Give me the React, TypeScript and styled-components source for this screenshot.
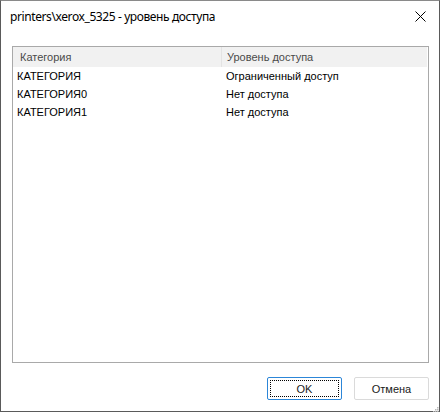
import React from 'react';
import styled, { createGlobalStyle } from 'styled-components';

const GlobalStyle = createGlobalStyle`
  html, body {
    margin: 0;
    padding: 0;
    background: #ffffff;
  }
  #root {
    width: 440px;
    height: 412px;
  }
`;

type Row = { category: string; level: string };

const rows: Row[] = [
    { category: 'КАТЕГОРИЯ', level: 'Ограниченный доступ' },
    { category: 'КАТЕГОРИЯ0', level: 'Нет доступа' },
    { category: 'КАТЕГОРИЯ1', level: 'Нет доступа' },
];

export default function App() {
    return (
        <>
            <GlobalStyle />
            <Window>
                <TitleBar>
                    <Title>printers\xerox_5325 - уровень доступа</Title>
                    <CloseButton aria-label="Закрыть">
                        <svg width="11" height="11" viewBox="0 0 11 11">
                            <path d="M0.5 0.5 L10.5 10.5 M10.5 0.5 L0.5 10.5" stroke="#000" strokeWidth="1" />
                        </svg>
                    </CloseButton>
                </TitleBar>
                <Body>
                    <ListView>
                        <Header>
                            <HeaderCell $first>Категория</HeaderCell>
                            <HeaderCell>Уровень доступа</HeaderCell>
                        </Header>
                        {rows.map((r) => (
                            <ListRow key={r.category}>
                                <Cell $first>{r.category}</Cell>
                                <Cell>{r.level}</Cell>
                            </ListRow>
                        ))}
                    </ListView>
                    <Buttons>
                        <Button $default>
                            <FocusRect>OK</FocusRect>
                        </Button>
                        <Button>Отмена</Button>
                    </Buttons>
                </Body>
                <Grip>
                    <svg width="10" height="10" viewBox="0 0 10 10">
                        {[
                            [8, 2], [6, 4], [8, 4], [4, 6], [6, 6], [8, 6], [2, 8], [4, 8], [6, 8], [8, 8],
                        ].map(([x, y]) => (
                            <rect key={`${x}-${y}`} x={x} y={y} width="1.5" height="1.5" fill="#b9b9b9" />
                        ))}
                    </svg>
                </Grip>
            </Window>
        </>
    );
}

const Window = styled.div`
  position: relative;
  box-sizing: border-box;
  width: 440px;
  height: 412px;
  background: #ffffff;
  border: 1px solid #5a5a5a;
  border-top-color: #8a8a8a;
  display: flex;
  flex-direction: column;
  font-family: 'Liberation Sans', Arial, sans-serif;
`;

const TitleBar = styled.div`
  height: 31px;
  display: flex;
  align-items: center;
  justify-content: space-between;
  padding: 0 9px 0 9px;
`;

const Title = styled.div`
  font-family: 'Noto Sans', 'Open Sans', sans-serif;
  font-size: 12px;
  color: #000000;
  letter-spacing: -0.4px;
`;

const CloseButton = styled.div`
  width: 20px;
  height: 20px;
  display: flex;
  align-items: center;
  justify-content: center;
`;

const Body = styled.div`
  flex: 1;
  display: flex;
  flex-direction: column;
  padding: 14px 10px 11px 11px;
`;

const ListView = styled.div`
  box-sizing: border-box;
  height: 317px;
  border: 1px solid #a9a9a9;
  padding: 0 1px 0 0;
  background: #ffffff;
`;

const Header = styled.div`
  display: grid;
  grid-template-columns: 209px 1fr;
  height: 20px;
  background: #f1f1f1;
  font-size: 11px;
  color: #4a4a4a;
`;

const HeaderCell = styled.div<{ $first?: boolean }>`
  display: flex;
  align-items: center;
  padding-left: ${(p) => (p.$first ? '7px' : '5px')};
  border-right: ${(p) => (p.$first ? '1px solid #e3e3e3' : 'none')};
`;

const ListRow = styled.div`
  display: grid;
  grid-template-columns: 210px 1fr;
  height: 18px;
  font-size: 11px;
  color: #000000;
`;

const Cell = styled.div<{ $first?: boolean }>`
  display: flex;
  align-items: center;
  padding-left: ${(p) => (p.$first ? '4px' : '3px')};
  white-space: nowrap;
`;

const Buttons = styled.div`
  display: flex;
  justify-content: flex-end;
  gap: 12px;
  margin-top: 14px;
`;

const Button = styled.div<{ $default?: boolean }>`
  box-sizing: border-box;
  width: 75px;
  height: 23px;
  display: flex;
  align-items: center;
  justify-content: center;
  padding: 2px;
  background: #ffffff;
  border: 1px solid ${(p) => (p.$default ? '#2c86d8' : '#dadada')};
  border-radius: 2px;
  font-size: 11px;
  color: #1a1a1a;
`;

const FocusRect = styled.div`
  box-sizing: border-box;
  width: 100%;
  height: 100%;
  display: flex;
  align-items: center;
  justify-content: center;
  border: 1px dotted #000000;
`;

const Grip = styled.div`
  position: absolute;
  right: 0;
  bottom: 0;
  width: 10px;
  height: 10px;
`;
